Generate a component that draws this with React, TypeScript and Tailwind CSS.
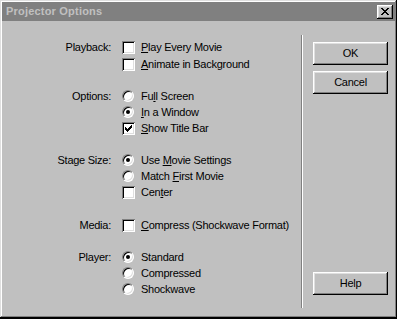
import React from 'react';

// 3D bevels, Win95 style
const raised =
  'shadow-[inset_-1px_-1px_#000000,inset_1px_1px_#ffffff,inset_-2px_-2px_#808080,inset_2px_2px_#dfdfdf]';
const sunken =
  'shadow-[inset_1px_1px_#808080,inset_-1px_-1px_#ffffff,inset_2px_2px_#000000,inset_-2px_-2px_#dfdfdf]';

// underline one letter (keyboard mnemonic)
const mn = (s: string, i: number) => (
  <>
    {s.slice(0, i)}
    <u className="underline-offset-[1px]">{s[i]}</u>
    {s.slice(i + 1)}
  </>
);

const Check = ({ on }: { on?: boolean }) => (
  <div className={`w-[13px] h-[13px] bg-white ${sunken} relative`}>
    {on && (
      <svg width="7" height="7" viewBox="0 0 7 7" className="absolute left-[3px] top-[3px]" shapeRendering="crispEdges">
        <path
          d="M6 0h1v1h-1zM5 1h2v1h-2zM0 2h1v1h-1zM4 2h3v1h-3zM0 3h2v1h-2zM3 3h3v1h-3zM0 4h5v1h-5zM1 5h3v1h-3zM2 6h1v1h-1z"
          fill="#000"
        />
      </svg>
    )}
  </div>
);

const Radio = ({ on }: { on?: boolean }) => (
  <div className="w-[12px] h-[12px] rounded-full bg-white border border-t-[#808080] border-l-[#808080] border-b-white border-r-white shadow-[inset_1px_1px_#000000,inset_-1px_-1px_#dfdfdf] flex items-center justify-center">
    {on && <div className="w-[4px] h-[4px] rounded-full bg-black" />}
  </div>
);

type Row = { kind: 'check' | 'radio'; text: React.ReactNode; on?: boolean };
type Group = { label: string; mt: string; gap: string; rows: Row[] };

const groups: Group[] = [
  {
    label: 'Playback:',
    mt: 'mt-0',
    gap: 'gap-px',
    rows: [
      { kind: 'check', text: mn('Play Every Movie', 0) },
      { kind: 'check', text: mn('Animate in Background', 0) },
    ],
  },
  {
    label: 'Options:',
    mt: 'mt-[16px]',
    gap: 'gap-0',
    rows: [
      { kind: 'radio', text: mn('Full Screen', 2) },
      { kind: 'radio', text: mn('In a Window', 0), on: true },
      { kind: 'check', text: mn('Show Title Bar', 0), on: true },
    ],
  },
  {
    label: 'Stage Size:',
    mt: 'mt-[16px]',
    gap: 'gap-0',
    rows: [
      { kind: 'radio', text: mn('Use Movie Settings', 4), on: true },
      { kind: 'radio', text: mn('Match First Movie', 6) },
      { kind: 'check', text: mn('Center', 3) },
    ],
  },
  {
    label: 'Media:',
    mt: 'mt-[17px]',
    gap: 'gap-0',
    rows: [{ kind: 'check', text: mn('Compress (Shockwave Format)', 0) }],
  },
  {
    label: 'Player:',
    mt: 'mt-[16px]',
    gap: 'gap-0',
    rows: [
      { kind: 'radio', text: 'Standard', on: true },
      { kind: 'radio', text: 'Compressed' },
      { kind: 'radio', text: 'Shockwave' },
    ],
  },
];

const Button = ({ children, className = '' }: { children: React.ReactNode; className?: string }) => (
  <div className={`w-[75px] h-[23px] ${raised} flex items-center justify-center ${className}`}>{children}</div>
);

export default function App() {
  return (
    <div
      className="w-[397px] h-[319px] bg-black text-black text-[11px] leading-none tracking-[-0.25px]"
      style={{ fontFamily: '"Liberation Sans", Arial, sans-serif' }}
    >
      <div
        className={`w-[397px] h-[318px] bg-[#c0c0c0] p-[2px] flex flex-col shadow-[inset_-1px_-1px_#000000,inset_1px_1px_#dfdfdf,inset_-2px_-2px_#808080,inset_2px_2px_#ffffff]`}
      >
        {/* title bar */}
        <div className="h-[19px] bg-[#808080] flex items-center pl-[4px] pr-[2px]">
          <span className="text-[#c0c0c0] font-bold text-[11px] tracking-[0.2px]">Projector Options</span>
          <div className={`ml-auto w-[16px] h-[14px] bg-[#c0c0c0] ${raised} flex items-center justify-center`}>
            <svg width="8" height="7" viewBox="0 0 8 7" shapeRendering="crispEdges" className="-mt-px">
              <path
                d="M0 0h2v1h-2zM6 0h2v1h-2zM1 1h2v1h-2zM5 1h2v1h-2zM2 2h4v1h-4zM3 3h2v1h-2zM2 4h4v1h-4zM1 5h2v1h-2zM5 5h2v1h-2zM0 6h2v1h-2zM6 6h2v1h-2z"
                fill="#000"
              />
            </svg>
          </div>
        </div>

        {/* body */}
        <div className="flex-1 flex">
          <div className="w-[299px] pt-[18px] flex flex-col">
            {groups.map((g) => (
              <div key={g.label} className={`flex ${g.mt}`}>
                <div className="w-[109px] h-[16px] flex items-center justify-end">{g.label}</div>
                <div className={`ml-[11px] flex flex-col ${g.gap}`}>
                  {g.rows.map((r, i) => (
                    <div key={i} className="h-[16px] flex items-center">
                      <div className="w-[13px] flex items-center">
                        {r.kind === 'check' ? <Check on={r.on} /> : <Radio on={r.on} />}
                      </div>
                      <span className="ml-[6px]">{r.text}</span>
                    </div>
                  ))}
                </div>
              </div>
            ))}
          </div>

          {/* separator */}
          <div className="w-[2px] mt-[14px] h-[273px] border-l border-l-[#808080] border-r border-r-white" />

          <div className="flex-1 pl-[10px] pt-[21px] pb-[21px] flex flex-col">
            <Button>OK</Button>
            <Button className="mt-[6px]">Cancel</Button>
            <Button className="mt-auto">Help</Button>
          </div>
        </div>
      </div>
    </div>
  );
}
